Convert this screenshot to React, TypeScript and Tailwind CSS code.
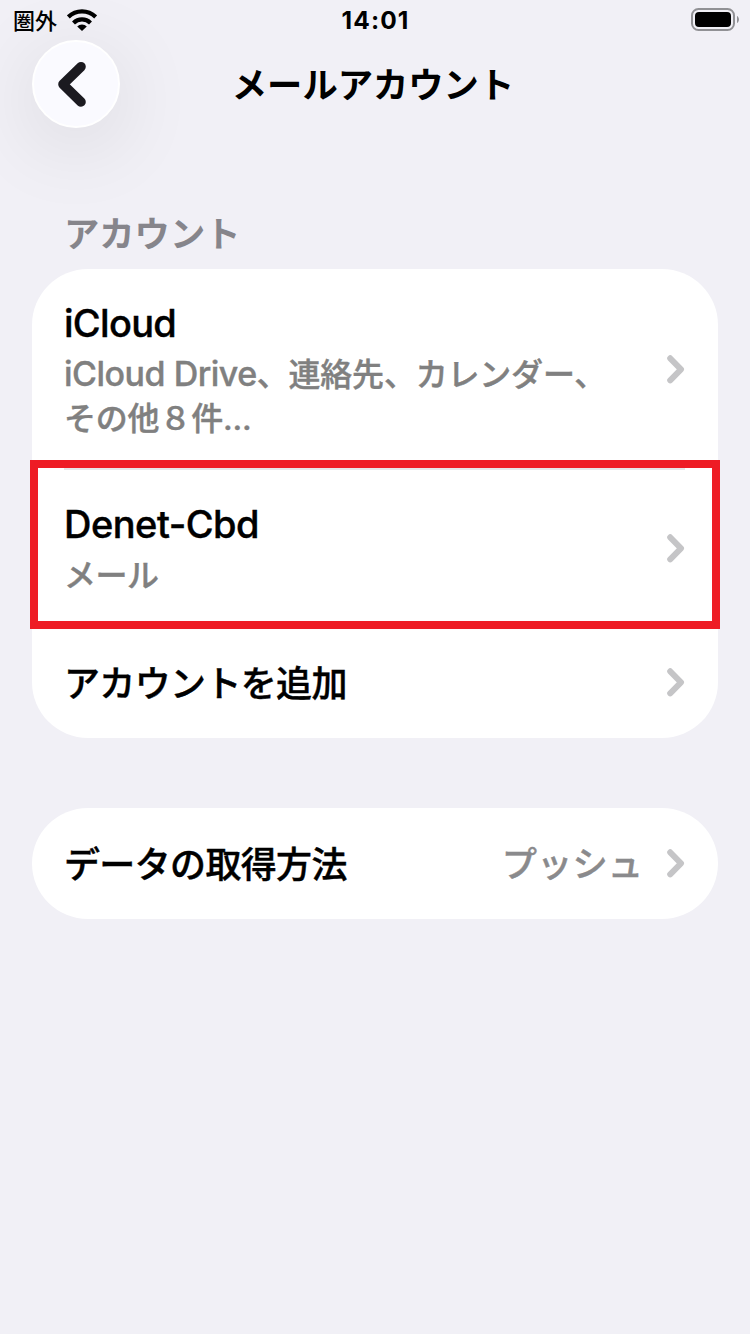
import type { ReactNode } from "react";

const Chevron = () => (
  <svg width="18" height="29" viewBox="0 0 18 29" fill="none" className="shrink-0">
    <path d="M3.2 3.3 L14 14.3 L3.2 25.3" stroke="#c5c5c7" strokeWidth="6" strokeLinecap="round" strokeLinejoin="round" />
  </svg>
);

const Label = ({ children }: { children: ReactNode }) => (
  <span className="pt-[3px] text-[36px] leading-[44px] font-medium tracking-[-0.65px] whitespace-nowrap text-black [-webkit-text-stroke:0.4px_black]">{children}</span>
);

function StatusBar() {
  return (
    <div className="grid h-10 grid-cols-3 text-black">
      <div className="flex items-start pl-[13px]">
        <span className="mt-[5px] text-[22px] leading-[32px] font-medium">圏外</span>
        <svg width="30" height="22" viewBox="0 0 30 22" className="mt-[9px] ml-[10px]">
          <g fill="none" stroke="#000" strokeWidth="4.2">
            <path d="M1.3 7.9 A19.6 19.6 0 0 1 28.7 7.9" />
            <path d="M6.5 13.9 A12.2 12.2 0 0 1 23.5 13.9" />
          </g>
          <path d="M10.2 17.6 A6.8 6.8 0 0 1 19.8 17.6 L15 22 Z" fill="#000" />
        </svg>
      </div>
      <div className="pt-[4px] pl-px text-center text-[24.5px] leading-[32px] font-bold tracking-[1.1px]">14:01</div>
      <div className="flex items-start justify-end pt-2 pr-[11px]">
        <svg width="48" height="23" viewBox="0 0 48 23">
          <rect x="1" y="1" width="42" height="21" rx="6.5" fill="none" stroke="#919195" strokeWidth="2" />
          <rect x="4" y="4" width="36" height="15" rx="4" fill="#000" />
          <path d="M46 8 C48.6 9.3 48.6 13.7 46 15 Z" fill="#919195" />
        </svg>
      </div>
    </div>
  );
}

export default function App() {
  return (
    <main className="h-[1334px] w-[750px] overflow-hidden bg-[#f1f0f6] font-['Inter','Noto_Sans_CJK_JP',sans-serif]">
      <StatusBar />
      <header className="grid grid-cols-[88px_1fr_88px] px-8">
        <button aria-label="戻る" className="flex h-[88px] w-[88px] items-center justify-center rounded-full border-2 border-white bg-[#fafaff] shadow-[0_16px_84px_rgba(0,0,0,0.11)]">
          <svg width="30" height="48" viewBox="0 0 30 48" fill="none" className="-ml-2">
            <path d="M24 6.7 L6 24.3 L24 42" stroke="#1b1a20" strokeWidth="9.6" strokeLinecap="round" strokeLinejoin="round" />
          </svg>
        </button>
        <h1 className="-ml-1 pt-[24px] text-center text-[35.3px] leading-[44px] font-bold whitespace-nowrap text-black">メールアカウント</h1>
      </header>

      <section className="px-8 pt-[85px]">
        <h2 className="h-[56px] pl-8 text-[35.3px] leading-[44px] font-bold text-[#86858b]">アカウント</h2>
        <div className="relative h-[469px] rounded-[56px] bg-white pr-[33px] pl-8">
          <div className="flex h-[201px] items-center justify-between border-b-2 border-[#e6e6e8] pt-[2px]">
            <div className="flex flex-col">
              <span className="text-[38px] leading-[48px] font-medium tracking-[-0.7px] text-black [-webkit-text-stroke:0.4px_black]">iCloud</span>
              <span className="mt-[5px] -mb-px text-[32px] leading-[44px] font-medium tracking-[-0.2px] whitespace-nowrap text-[#808080] [-webkit-text-stroke:0.4px_#808080]">
                <span className="text-[34px] tracking-[-0.5px]">iCloud Drive</span>、連絡先、カレンダー、
                <br />
                その他８件...
              </span>
            </div>
            <Chevron />
          </div>
          <div className="flex h-[156px] items-center justify-between">
            <div className="flex flex-col">
              <span className="text-[38px] leading-[48px] font-medium tracking-[-0.5px] text-black [-webkit-text-stroke:0.4px_black]">Denet-Cbd</span>
              <span className="mt-[6px] -mb-[2px] text-[32px] leading-[44px] font-medium tracking-[-0.45px] text-[#808080] [-webkit-text-stroke:0.4px_#808080]">メール</span>
            </div>
            <Chevron />
          </div>
          <div className="flex h-[112px] items-center justify-between">
            <Label>アカウントを追加</Label>
            <Chevron />
          </div>
          <div className="absolute top-[191px] -left-[2px] h-[169px] w-[690px] border-8 border-[#ee1c25]" />
        </div>
      </section>

      <section className="px-8 pt-[70px]">
        <div className="flex h-[111px] items-center rounded-[56px/55.5px] bg-white pr-[33px] pl-8">
          <Label>データの取得方法</Label>
          <span className="mr-[24px] ml-auto pt-[3px] text-[35.3px] leading-[44px] font-medium text-[#8a8a8c] [-webkit-text-stroke:0.4px_#8a8a8c]">プッシュ</span>
          <Chevron />
        </div>
      </section>
    </main>
  );
}
